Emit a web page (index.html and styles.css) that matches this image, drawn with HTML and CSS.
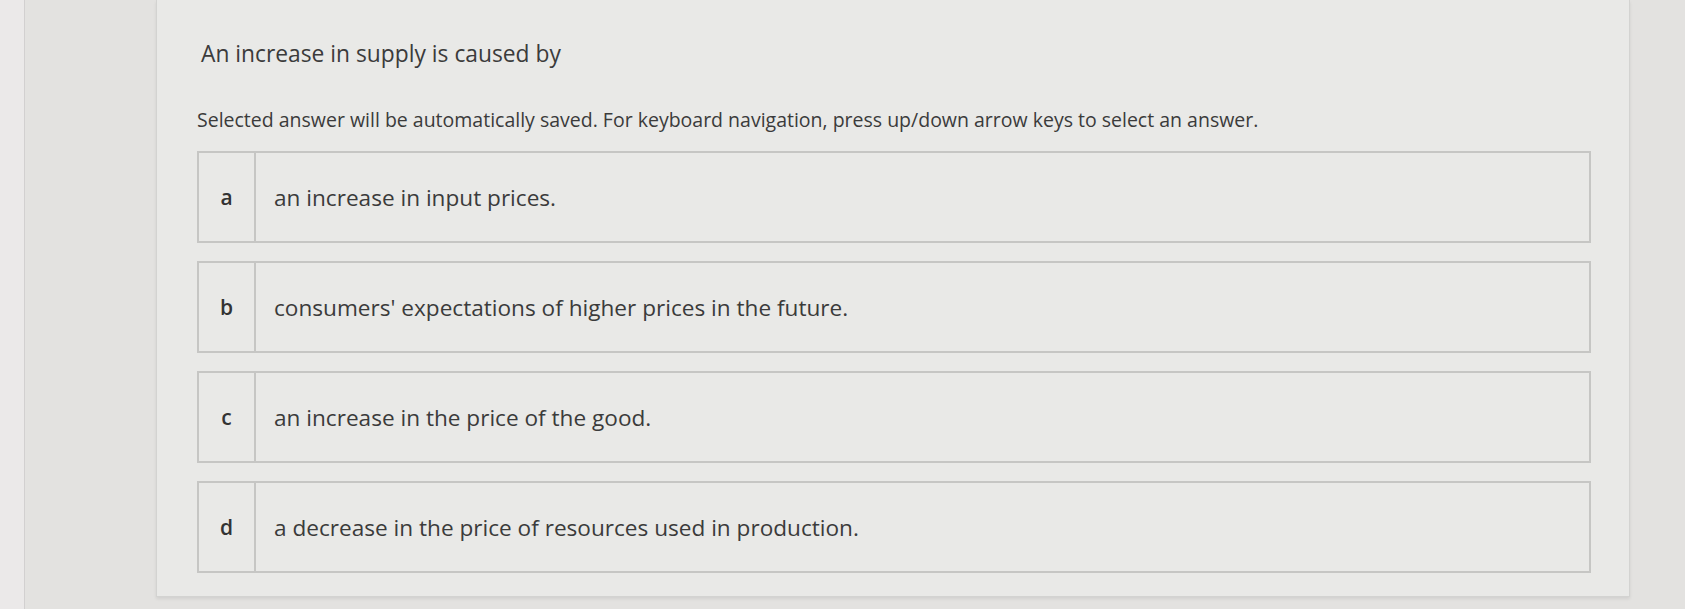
FILE: index.html
```html
<!DOCTYPE html>
<html lang="en">
<head>
    <meta charset="UTF-8">
    <meta name="viewport" content="width=device-width, initial-scale=1.0">
    <title>Question</title>
    <link rel="stylesheet" href="styles.css">
</head>
<body>
    <div class="rail"></div>

    <div class="page">
        <div class="question-card">
            <h1 class="question-title">An increase in supply is caused by</h1>
            <p class="question-hint">Selected answer will be automatically saved. For keyboard navigation, press up/down arrow keys to select an answer.</p>

            <div class="choices" role="radiogroup">
                <div class="choice" role="radio" aria-checked="false" tabindex="0">
                    <span class="choice-letter">a</span>
                    <span class="choice-text">an increase in input prices.</span>
                </div>
                <div class="choice" role="radio" aria-checked="false" tabindex="-1">
                    <span class="choice-letter">b</span>
                    <span class="choice-text">consumers' expectations of higher prices in the future.</span>
                </div>
                <div class="choice" role="radio" aria-checked="false" tabindex="-1">
                    <span class="choice-letter">c</span>
                    <span class="choice-text">an increase in the price of the good.</span>
                </div>
                <div class="choice" role="radio" aria-checked="false" tabindex="-1">
                    <span class="choice-letter">d</span>
                    <span class="choice-text">a decrease in the price of resources used in production.</span>
                </div>
            </div>
        </div>
    </div>
</body>
</html>
```

FILE: styles.css
```css
:root {
    --page-background: #e3e2e0;
    --rail-background: #ebe9e9;
    --card-background: #e9e9e7;
    --card-border: #d3d3d1;
    --choice-border: #c6c6c4;
    --text-color: #3b3b3b;
    --text-strong: #333333;
}

* {
    margin: 0;
    padding: 0;
    box-sizing: border-box;
}

html, body {
    height: 100%;
}

body {
    background-color: var(--page-background);
    font-family: 'Open Sans', Arial, sans-serif;
    color: var(--text-color);
    display: flex;
    overflow: hidden;
}

.rail {
    width: 25px;
    flex-shrink: 0;
    background-color: var(--rail-background);
    border-right: 1px solid #d2d0d0;
}

.page {
    flex: 1;
    display: flex;
    padding-left: 131px;
}

.question-card {
    width: 1474px;
    height: 597px;
    flex-shrink: 0;
    background-color: var(--card-background);
    border: 1px solid var(--card-border);
    border-top: none;
    box-shadow: 0 2px 3px rgba(0,0,0,0.08);
    padding: 38px 38px 0 40px;
}

.question-title {
    font-size: 22.8px;
    font-weight: 400;
    line-height: 32px;
    padding-left: 4px;
}

.question-hint {
    font-size: 19.5px;
    line-height: 26px;
    margin-top: 37px;
}

.choices {
    margin-top: 18px;
    display: flex;
    flex-direction: column;
    gap: 18px;
}

.choice {
    display: flex;
    align-items: stretch;
    height: 92px;
    border: 2px solid var(--choice-border);
    cursor: pointer;
}

.choice-letter {
    width: 57px;
    flex-shrink: 0;
    display: flex;
    align-items: center;
    justify-content: center;
    border-right: 2px solid var(--choice-border);
    font-size: 21px;
    font-weight: 600;
    color: var(--text-strong);
}

.choice-text {
    display: flex;
    align-items: center;
    padding-left: 18px;
    font-size: 22.6px;
}
```
